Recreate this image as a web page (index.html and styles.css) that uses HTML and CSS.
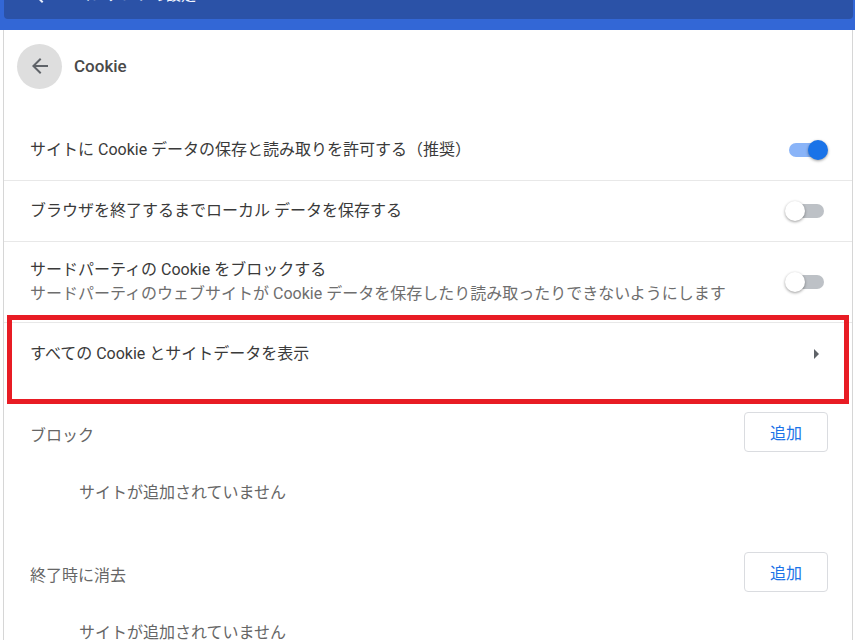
FILE: index.html
```html
<!DOCTYPE html>
<html lang="ja">
<head>
<meta charset="utf-8">
<title>Cookie</title>
<link rel="stylesheet" href="styles.css">
</head>
<body>
<header class="topbar">
  <div class="search">
    <svg class="search-icon" viewBox="0 0 24 24" width="24" height="24"><path d="M20 11H7.83l5.59-5.59L12 4l-8 8 8 8 1.41-1.41L7.83 13H20v-2z" fill="#e8eefc"/></svg>
    <span class="search-text">コンテンツの設定</span>
  </div>
</header>
<main class="card">
  <div class="title-row">
    <div class="back">
      <svg viewBox="0 0 24 24" width="24" height="24"><path d="M20 11H7.83l5.59-5.59L12 4l-8 8 8 8 1.41-1.41L7.83 13H20v-2z" fill="#5f6368"/></svg>
    </div>
    <h1 class="title">Cookie</h1>
  </div>

  <div class="row">
    <div class="row-text">サイトに Cookie データの保存と読み取りを許可する（推奨）</div>
    <div class="toggle on"><span class="track"></span><span class="knob"></span></div>
  </div>
  <div class="row">
    <div class="row-text">ブラウザを終了するまでローカル データを保存する</div>
    <div class="toggle"><span class="track"></span><span class="knob"></span></div>
  </div>
  <div class="row two-line">
    <div class="row-text">
      <div>サードパーティの Cookie をブロックする</div>
      <div class="secondary">サードパーティのウェブサイトが Cookie データを保存したり読み取ったりできないようにします</div>
    </div>
    <div class="toggle"><span class="track"></span><span class="knob"></span></div>
  </div>
  <div class="row link-row">
    <div class="row-text">すべての Cookie とサイトデータを表示</div>
    <svg class="arrow" viewBox="0 0 24 24" width="24" height="24"><path d="M10 17l5-5-5-5v10z" fill="#5f6368"/></svg>
  </div>

  <section class="section">
    <div class="section-head">
      <span class="section-label">ブロック</span>
      <button class="add-btn">追加</button>
    </div>
    <div class="empty">サイトが追加されていません</div>
  </section>
  <section class="section">
    <div class="section-head">
      <span class="section-label">終了時に消去</span>
      <button class="add-btn">追加</button>
    </div>
    <div class="empty">サイトが追加されていません</div>
  </section>
</main>
<div class="highlight"></div>
</body>
</html>
```

FILE: styles.css
```css
html, body {
  margin: 0;
  padding: 0;
}
body {
  background: #ffffff;
  font-family: Roboto, "Noto Sans CJK JP", sans-serif;
  color: #3a3a3a;
  font-size: 16px;
  line-height: 24px;
  overflow: hidden;
  height: 640px;
  position: relative;
}
.topbar {
  background: #3367d6;
  height: 30px;
  padding: 0 2px 0 4px;
  overflow: hidden;
}
.search {
  background: #2b52a7;
  height: 48px;
  margin-top: -29px;
  border-radius: 0 0 4px 4px;
  display: flex;
  align-items: center;
  padding-left: 26px;
  gap: 22px;
}
.search-text {
  color: #f0f4ff;
  font-size: 15px;
  line-height: 20px;
}
.card {
  margin: 0 2px 0 3px;
  border-left: 1px solid #d6d6d6;
  border-right: 1px solid #d6d6d6;
  min-height: 610px;
  background: #fff;
}
.title-row {
  height: 72px;
  display: flex;
  align-items: center;
  padding-left: 13px;
  gap: 12px;
  margin-bottom: 18px;
}
.back {
  width: 45px;
  height: 45px;
  border-radius: 50%;
  background: #dedede;
  display: flex;
  align-items: center;
  justify-content: center;
}
.title {
  margin: 0;
  font-size: 17px;
  font-weight: 500;
  color: #4a4a4a;
}
.row {
  display: flex;
  align-items: center;
  justify-content: space-between;
  min-height: 61px;
  padding: 0 24px 0 26px;
  border-bottom: 1px solid #e8e8e8;
  box-sizing: border-box;
}
.row.two-line {
  padding-top: 16px;
  padding-bottom: 16px;
  min-height: 81px;
}
.row.link-row {
  border-bottom: none;
  min-height: 61px;
}
.row-text {
  color: #3a3a3a;
}
.secondary {
  color: #6e6e6e;
}
.toggle {
  position: relative;
  width: 43px;
  height: 20px;
  flex: none;
}
.toggle .track {
  position: absolute;
  left: 4px;
  right: 4px;
  top: 3px;
  height: 14px;
  border-radius: 7px;
  background: #bdc1c6;
}
.toggle .knob {
  position: absolute;
  left: 0;
  top: 0;
  width: 20px;
  height: 20px;
  border-radius: 50%;
  background: #ffffff;
  box-shadow: 0 1px 3px rgba(0, 0, 0, 0.4);
}
.toggle.on .track {
  background: #8ab4f8;
}
.toggle.on .knob {
  left: auto;
  right: 0;
  background: #1a73e8;
}
.arrow {
  flex: none;
}
.section {
  padding: 0 24px 0 26px;
  margin-top: 28px;
}
.section + .section {
  margin-top: 47px;
}
.section-head {
  display: flex;
  align-items: center;
  justify-content: space-between;
  height: 40px;
}
.section-label {
  color: #666666;
  padding-top: 8px;
}
.add-btn {
  width: 84px;
  height: 40px;
  background: #fff;
  border: 1px solid #dadce0;
  border-radius: 4px;
  color: #1a73e8;
  font-family: Roboto, "Noto Sans CJK JP", sans-serif;
  font-size: 16px;
  padding: 0;
}
.empty {
  margin-top: 29px;
  padding-left: 49px;
  color: #666666;
}
.highlight {
  position: absolute;
  left: 7px;
  top: 315px;
  width: 832px;
  height: 79px;
  border: 5px solid #e81c24;
}
```
